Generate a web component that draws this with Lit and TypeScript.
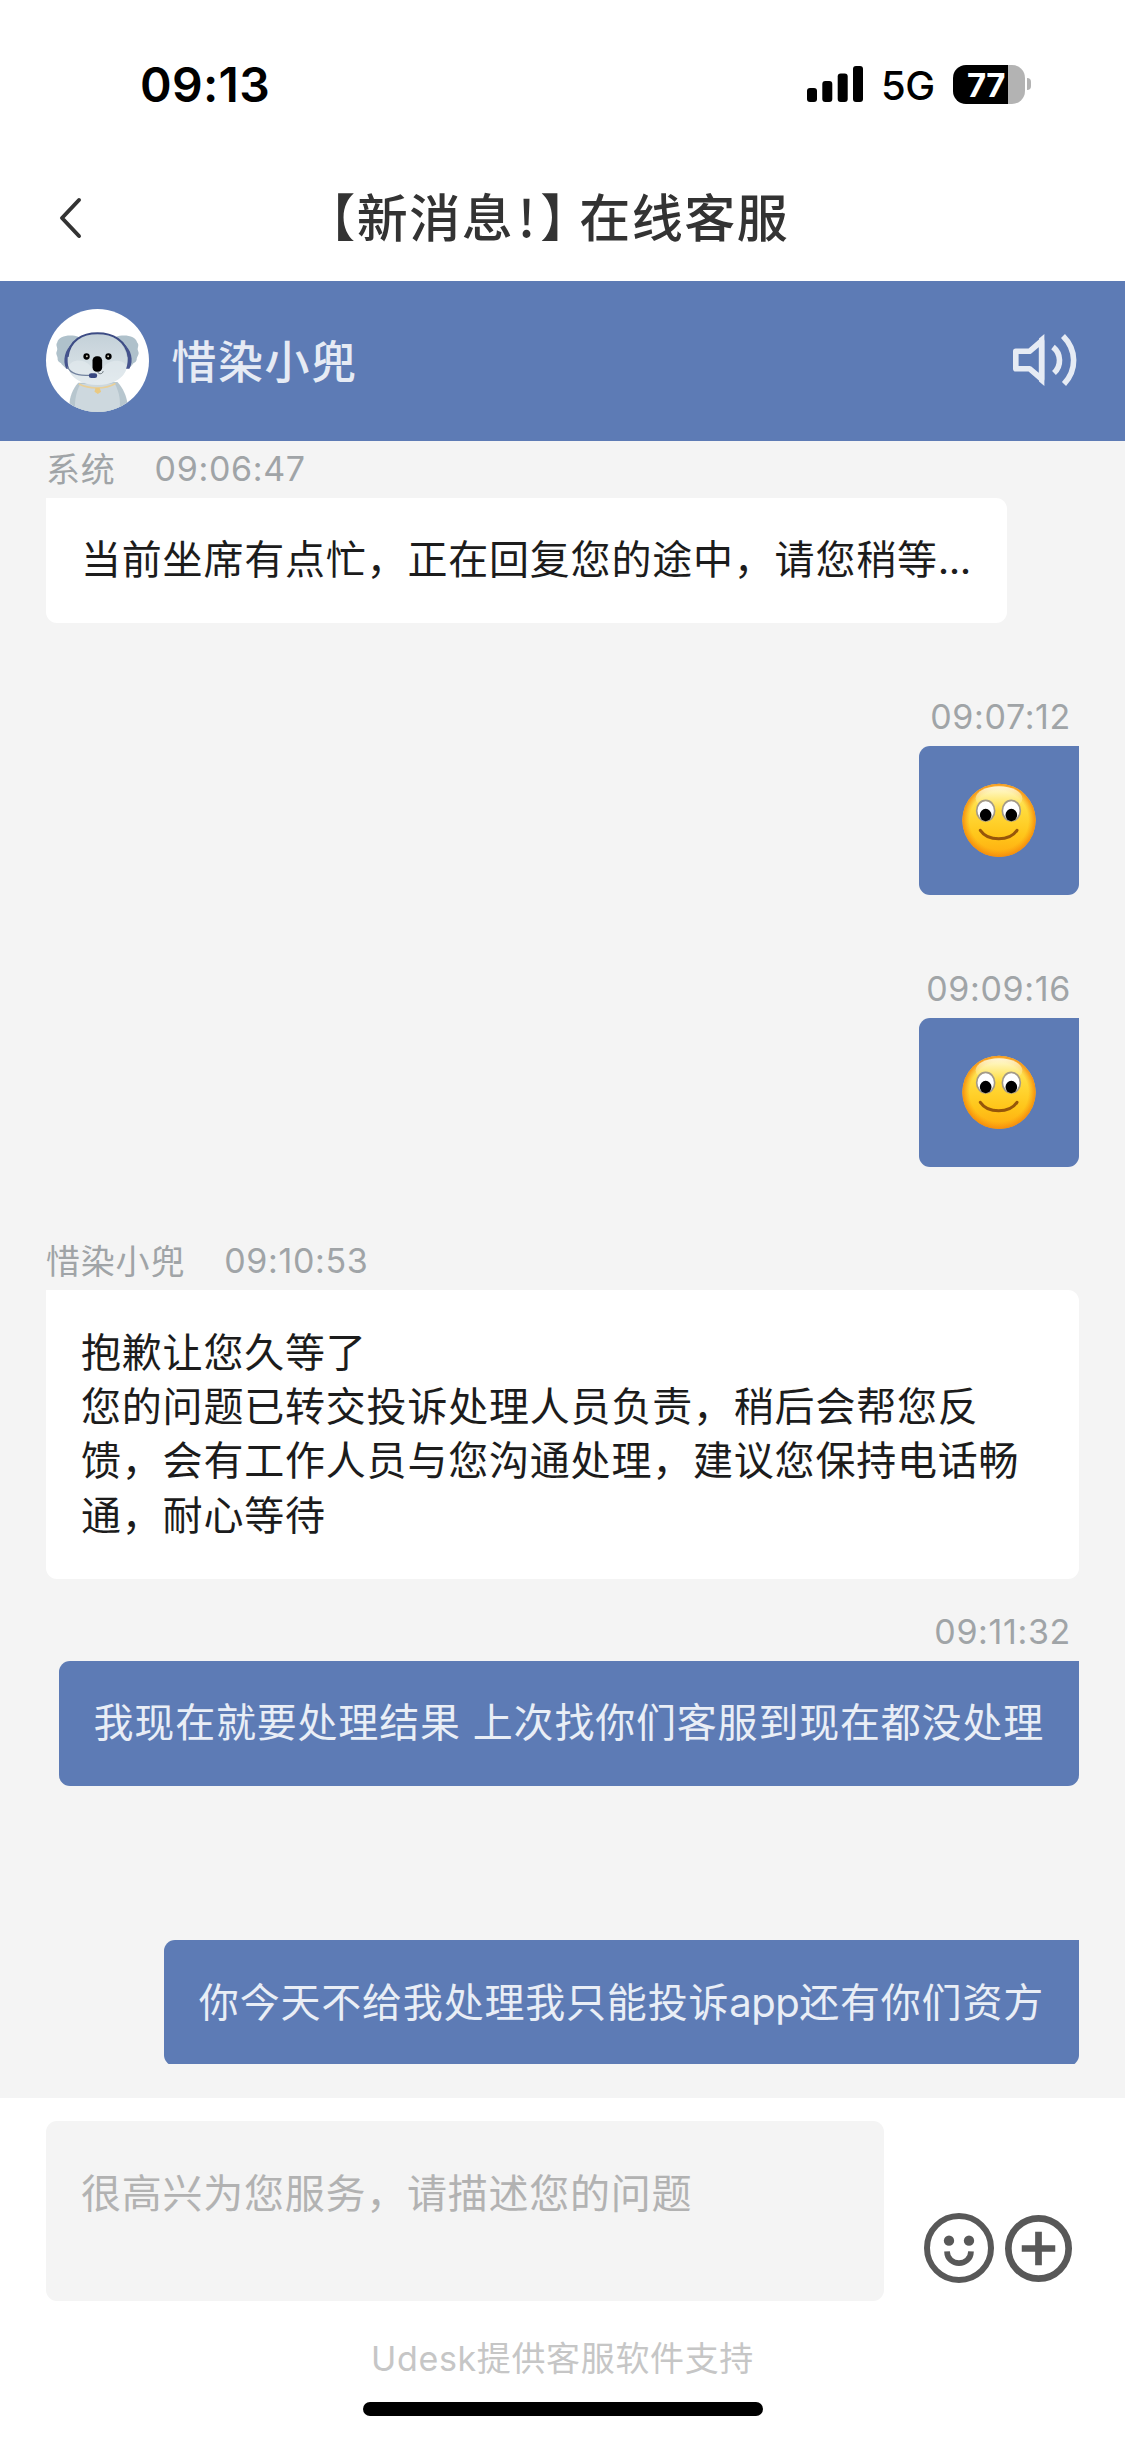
import { LitElement, html, css, nothing } from "lit";
import { customElement, property } from "lit/decorators.js";
import { classMap } from "lit/directives/class-map.js";

interface Message {
  from: "agent" | "user";
  name?: string;
  time?: string;
  lines?: string[];
  emoji?: boolean;
  gap?: "tight" | "wide";
}

const MESSAGES: Message[] = [
  { from: "agent", name: "系统", time: "09:06:47", lines: ["当前坐席有点忙，正在回复您的途中，请您稍等..."] },
  { from: "user", time: "09:07:12", emoji: true },
  { from: "user", time: "09:09:16", emoji: true },
  {
    from: "agent",
    name: "惜染小兜",
    time: "09:10:53",
    lines: [
      "抱歉让您久等了",
      "您的问题已转交投诉处理人员负责，稍后会帮您反馈，会有工作人员与您沟通处理，建议您保持电话畅通，耐心等待",
    ],
    gap: "tight",
  },
  { from: "user", time: "09:11:32", lines: ["我现在就要处理结果 上次找你们客服到现在都没处理"], gap: "wide" },
  { from: "user", lines: ["你今天不给我处理我只能投诉app还有你们资方"] },
];

const FONT = css`
  font-family: Inter, "Noto Sans CJK SC", sans-serif;
`;

@customElement("status-bar")
class StatusBar extends LitElement {
  static styles = css`
    :host {
      display: flex;
      align-items: center;
      height: 168px;
      padding: 0 94px 0 140px;
      box-sizing: border-box;
      color: #000;
      ${FONT}
    }
    .clock {
      flex: 1;
      margin-top: 1px;
      font-size: 48px;
      font-weight: 600;
      letter-spacing: 0.3px;
      line-height: 60px;
    }
    .signal {
      width: 56px;
      height: 36px;
    }
    .network {
      margin: 3px 0 0 18px;
      width: 53px;
      font-size: 40px;
      font-weight: 500;
      line-height: 48px;
      letter-spacing: -0.6px;
    }
    .battery {
      display: flex;
      align-items: center;
      margin-left: 19px;
    }
    .cell {
      width: 72px;
      height: 39px;
      border-radius: 13px;
      box-sizing: border-box;
      padding-left: 14px;
      background: linear-gradient(to right, #000 55px, #b3b3b3 55px);
      color: #fff;
      font-size: 33px;
      font-weight: 700;
      line-height: 40px;
      letter-spacing: -0.5px;
    }
    .nub {
      width: 4px;
      height: 12px;
      margin-left: 2px;
      border-radius: 0 4px 4px 0;
      background: #b3b3b3;
    }
  `;
  render() {
    return html`
      <span class="clock">09:13</span>
      <svg class="signal" viewBox="0 0 56 36">
        <rect x="0" y="22" width="10" height="14" rx="3" />
        <rect x="15.3" y="15" width="10" height="21" rx="3" />
        <rect x="30.7" y="7.5" width="10" height="28.5" rx="3" />
        <rect x="46" y="0" width="10" height="36" rx="3" />
      </svg>
      <span class="network">5G</span>
      <div class="battery"><div class="cell">77</div><div class="nub"></div></div>
    `;
  }
}

@customElement("nav-bar")
class NavBar extends LitElement {
  static styles = css`
    :host {
      display: grid;
      grid-template-columns: 140px 1fr 140px;
      align-items: center;
      height: 113px;
      padding-bottom: 14px;
      box-sizing: border-box;
      color: #333;
      ${FONT}
    }
    .back {
      width: 24px;
      height: 42px;
      margin-left: 58px;
      fill: none;
      stroke: #333;
      stroke-width: 4;
      stroke-linecap: round;
      stroke-linejoin: round;
    }
    .title {
      display: flex;
      justify-content: center;
      margin: 0 0 6px -6px;
      font-family: "Noto Sans CJK SC", sans-serif;
      font-size: 51px;
      font-weight: 500;
      line-height: 74px;
      letter-spacing: 1.5px;
      white-space: pre;
    }
    .open,
    .close {
      font-feature-settings: "halt" 1;
    }
    .bang {
      width: 26px;
      text-align: center;
    }
    .close {
      width: 39px;
    }
  `;
  render() {
    return html`
      <svg class="back" viewBox="0 0 24 42"><path d="M21 3 L4 21 L21 39" /></svg>
      <div class="title"><span class="open">【</span><span>新消息</span><span class="bang">!</span><span class="close">】</span><span>在线客服</span></div>
    `;
  }
}

@customElement("agent-avatar")
class AgentAvatar extends LitElement {
  static styles = css`
    :host {
      display: block;
      width: 103px;
      height: 103px;
      border-radius: 50%;
      overflow: hidden;
      background: #fff;
    }
    svg {
      display: block;
      width: 103px;
      height: 103px;
    }
  `;
  render() {
    return html`
      <svg viewBox="47 42 310 310">
        <defs>
          <linearGradient id="head" x1="0" y1="0" x2="0" y2="1">
            <stop offset="0" stop-color="#c3d0d8" />
            <stop offset="1" stop-color="#dfe7eb" />
          </linearGradient>
        </defs>
        <path fill="#afc1cb" d="M146 126 C118 116 84 124 81 142 C74 152 84 158 80 168 C74 180 84 184 82 194 C84 204 92 202 94 208 L108 222 Z" />
        <path fill="#afc1cb" d="M256 126 C284 116 318 124 321 142 C330 152 320 158 324 168 C330 180 320 184 320 194 C318 204 312 202 308 208 L296 222 Z" />
        <path fill="#b7c6ce" d="M144 264 C126 284 118 310 118 326 L150 352 L256 352 L292 326 C290 306 278 278 262 262 Z" />
        <path fill="#cdd8de" d="M150 268 C134 300 132 330 136 352 H266 C274 326 268 292 254 266 Z" />
        <path fill="url(#head)" d="M202 114 C142 114 110 160 112 206 C114 246 152 271 202 271 C252 271 290 246 292 206 C294 160 262 114 202 114 Z" />
        <path fill="#e6edf0" opacity=".55" d="M115 216 C124 188 170 192 186 220 H218 C234 192 282 190 290 216 C286 248 250 270 202 270 C156 270 120 250 115 216 Z" />
        <path fill="none" stroke="#e9cf98" stroke-width="5" d="M146 268 C178 284 224 284 256 266" />
        <path fill="#e9c982" d="M196 279 L208 279 L213 291 L203 298 L193 291 Z" />
        <path fill="none" stroke="#3d4c85" stroke-width="6" d="M112 186 C118 136 156 115 202 115 C248 115 288 136 296 186" />
        <path fill="#45538d" d="M127 144 C104 164 96 196 108 222 L116 222 C108 194 112 168 127 144 Z" />
        <path fill="#45538d" d="M279 144 C304 164 312 196 298 222 L288 222 C298 194 294 168 279 144 Z" />
        <path fill="none" stroke="#73839f" stroke-width="4" d="M112 216 C120 238 146 242 180 242" />
        <rect x="176" y="235" width="25" height="15" rx="7" fill="#384780" />
        <circle cx="169" cy="185" r="9.5" />
        <circle cx="235" cy="185" r="9.5" />
        <circle cx="170" cy="184" r="3" fill="#c8c4b4" />
        <circle cx="234" cy="184" r="3" fill="#c8c4b4" />
        <rect x="187" y="184" width="29" height="47" rx="13" />
        <path fill="none" stroke="#59636b" stroke-width="2.5" d="M202 231 C206 240 218 238 219 229" />
      </svg>
    `;
  }
}

@customElement("agent-header")
class AgentHeader extends LitElement {
  static styles = css`
    :host {
      display: flex;
      align-items: center;
      height: 160px;
      padding: 0 48px 2px 46px;
      box-sizing: border-box;
      background: #5d7bb5;
      color: #e6ebf4;
      ${FONT}
    }
    .name {
      flex: 1;
      margin: 0 0 1px 22.5px;
      font-family: "Noto Sans CJK SC", sans-serif;
      font-size: 45px;
      font-weight: 500;
      letter-spacing: 1.5px;
      line-height: 60px;
    }
    .speaker {
      width: 64px;
      height: 54px;
      fill: none;
      stroke: #e6ebf4;
      stroke-width: 5.6;
    }
  `;
  render() {
    return html`
      <agent-avatar></agent-avatar>
      <span class="name">惜染小兜</span>
      <svg class="speaker" viewBox="0 0 64 54">
        <path stroke-linejoin="round" d="M2.8 18.3 H16.5 L28.6 8 V46 L16.5 35.7 H2.8 Z" />
        <path d="M31.4 1 V53 L26 48.5 V5.5 Z" fill="#e6ebf4" stroke="none" />
        <path d="M40 14 C48.5 21 48.5 33 41 40" />
        <path d="M50 3 C64 17 64 37 51 51" />
      </svg>
    `;
  }
}

@customElement("smile-face")
class SmileFace extends LitElement {
  static styles = css`
    :host,
    svg {
      display: block;
      width: 74px;
      height: 75px;
    }
  `;
  render() {
    return html`
      <svg viewBox="0 0 222 225">
        <defs>
          <linearGradient id="face" x1="0" y1="0" x2="0" y2="1">
            <stop offset="0" stop-color="#ffee80" />
            <stop offset=".35" stop-color="#ffdb3c" />
            <stop offset=".7" stop-color="#ffc61a" />
            <stop offset="1" stop-color="#ffab10" />
          </linearGradient>
          <radialGradient id="rim" cx=".5" cy=".5" r=".5">
            <stop offset=".8" stop-color="#f79a10" stop-opacity="0" />
            <stop offset="1" stop-color="#f58a0c" stop-opacity=".95" />
          </radialGradient>
          <linearGradient id="shine" x1="0" y1="0" x2="0" y2="1">
            <stop offset="0" stop-color="#fffbe6" stop-opacity=".9" />
            <stop offset="1" stop-color="#fff3a0" stop-opacity="0" />
          </linearGradient>
        </defs>
        <circle cx="111" cy="112" r="110" fill="url(#face)" />
        <circle cx="111" cy="112" r="110" fill="url(#rim)" />
        <ellipse cx="111" cy="46" rx="70" ry="36" fill="url(#shine)" />
        <g fill="#fff" stroke="#a39a88" stroke-width="5">
          <ellipse cx="71" cy="83" rx="27" ry="31" />
          <ellipse cx="148" cy="83" rx="27" ry="31" />
        </g>
        <ellipse cx="71" cy="96" rx="17.5" ry="18.5" />
        <ellipse cx="148" cy="96" rx="17.5" ry="18.5" />
        <path d="M55 142 C78 176 142 176 165 142" fill="none" stroke="#96560a" stroke-width="9" stroke-linecap="round" />
      </svg>
    `;
  }
}

@customElement("chat-message")
class ChatMessage extends LitElement {
  @property({ attribute: false }) message!: Message;

  static styles = css`
    :host {
      display: block;
      ${FONT}
    }
    .message {
      display: flex;
      flex-direction: column;
      align-items: flex-start;
      margin-bottom: 65px;
    }
    .message.user {
      align-items: flex-end;
    }
    .message.tight {
      margin-bottom: 24px;
    }
    .message.wide {
      margin-bottom: 154.6px;
    }
    .meta {
      display: flex;
      align-items: center;
      height: 58px;
      box-sizing: border-box;
      color: #a0a4a7;
      font-size: 34px;
      line-height: 48px;
      letter-spacing: 0.65px;
    }
    .name {
      margin: 0 39px 2px 0;
      font-family: "Noto Sans CJK SC", sans-serif;
      letter-spacing: 0.8px;
    }
    .user .meta {
      padding-right: 8px;
    }
    .bubble {
      box-sizing: border-box;
      padding: 35.4px 36px 35.4px 35px;
      border-radius: 0 11px 11px 11px;
      background: #fff;
      color: #1c1c1c;
      font-size: 40px;
      line-height: 54.4px;
      letter-spacing: 0.8px;
    }
    .user .bubble {
      padding-right: 35px;
      border-radius: 11px 0 11px 11px;
      background: #5d7bb5;
      color: #e9eef6;
    }
    .line {
      margin: 0;
    }
    .latin {
      letter-spacing: -0.5px;
    }
    .bubble.emoji {
      display: flex;
      align-items: center;
      justify-content: center;
      width: 160px;
      height: 149px;
      padding: 0;
    }
  `;

  // Latin runs are set tighter than the Chinese text around them.
  private renderLine(line: string) {
    const parts = line.split(/([a-z.]+)/i).filter(Boolean);
    return html`<p class="line">${parts.map((p) => (/^[a-z.]+$/i.test(p) ? html`<span class="latin">${p}</span>` : p))}</p>`;
  }

  render() {
    const m = this.message;
    return html`
      <div class=${classMap({ message: true, user: m.from === "user", tight: m.gap === "tight", wide: m.gap === "wide" })}>
        ${m.time
          ? html`<div class="meta">${m.name ? html`<span class="name">${m.name}</span>` : nothing}<span>${m.time}</span></div>`
          : nothing}
        <div class=${classMap({ bubble: true, emoji: !!m.emoji })}>
          ${m.emoji ? html`<smile-face></smile-face>` : m.lines?.map((l) => this.renderLine(l))}
        </div>
      </div>
    `;
  }
}

@customElement("message-composer")
class MessageComposer extends LitElement {
  static styles = css`
    :host {
      display: flex;
      flex-direction: column;
      align-items: center;
      flex: 1;
      background: #fff;
      ${FONT}
    }
    .row {
      display: flex;
      align-items: flex-end;
      align-self: stretch;
      padding: 23px 52px 0 46px;
    }
    .field {
      width: 838px;
      height: 180px;
      box-sizing: border-box;
      padding: 45px 35px;
      border-radius: 11px;
      background: #f4f4f4;
      color: #b2b2b2;
      font-size: 40px;
      line-height: 56px;
      letter-spacing: 0.75px;
    }
    .actions {
      display: flex;
      align-items: center;
      gap: 11px;
      margin: 0 0 18px 40px;
    }
    .icon {
      display: block;
      fill: none;
      stroke: #585858;
    }
    .face {
      width: 70px;
      height: 70px;
    }
    .plus {
      width: 67px;
      height: 67px;
    }
    .solid {
      fill: #585858;
      stroke: none;
    }
    .credit {
      margin-top: 33px;
      color: #c6c6c6;
      font-size: 34px;
      line-height: 50px;
      letter-spacing: 0.65px;
    }
    .home {
      width: 400px;
      height: 14px;
      margin-top: 18px;
      border-radius: 7px;
      background: #000;
    }
  `;
  render() {
    return html`
      <div class="row">
        <div class="field">很高兴为您服务，请描述您的问题</div>
        <div class="actions">
          <svg class="icon face" viewBox="0 0 210 210">
            <circle cx="105" cy="105" r="96" stroke-width="18" />
            <circle class="solid" cx="75" cy="83" r="15.5" />
            <circle class="solid" cx="135" cy="83" r="15.5" />
            <path stroke-width="17" d="M69 115 C70 162 140 162 141 115" />
          </svg>
          <svg class="icon plus" viewBox="0 0 200 200">
            <circle cx="100" cy="100" r="90" stroke-width="20" />
            <path stroke-width="20" d="M50 100 H150 M100 50 V150" />
          </svg>
        </div>
      </div>
      <div class="credit">Udesk提供客服软件支持</div>
      <div class="home"></div>
    `;
  }
}

@customElement("app-root")
class AppRoot extends LitElement {
  static styles = css`
    :host {
      display: flex;
      flex-direction: column;
      width: 1125px;
      height: 2439px;
      overflow: hidden;
      background: #fff;
    }
    .chat {
      box-sizing: border-box;
      height: 1657px;
      padding-bottom: 34px;
      background: #f4f4f4;
    }
    .scroll {
      height: 1623px;
      box-sizing: border-box;
      padding: 0 46px;
      overflow: hidden;
    }
    .scroll > :first-child {
      margin-top: -1px;
    }
  `;
  render() {
    return html`
      <status-bar></status-bar>
      <nav-bar></nav-bar>
      <agent-header></agent-header>
      <main class="chat">
        <div class="scroll">${MESSAGES.map((m) => html`<chat-message .message=${m}></chat-message>`)}</div>
      </main>
      <message-composer></message-composer>
    `;
  }
}
